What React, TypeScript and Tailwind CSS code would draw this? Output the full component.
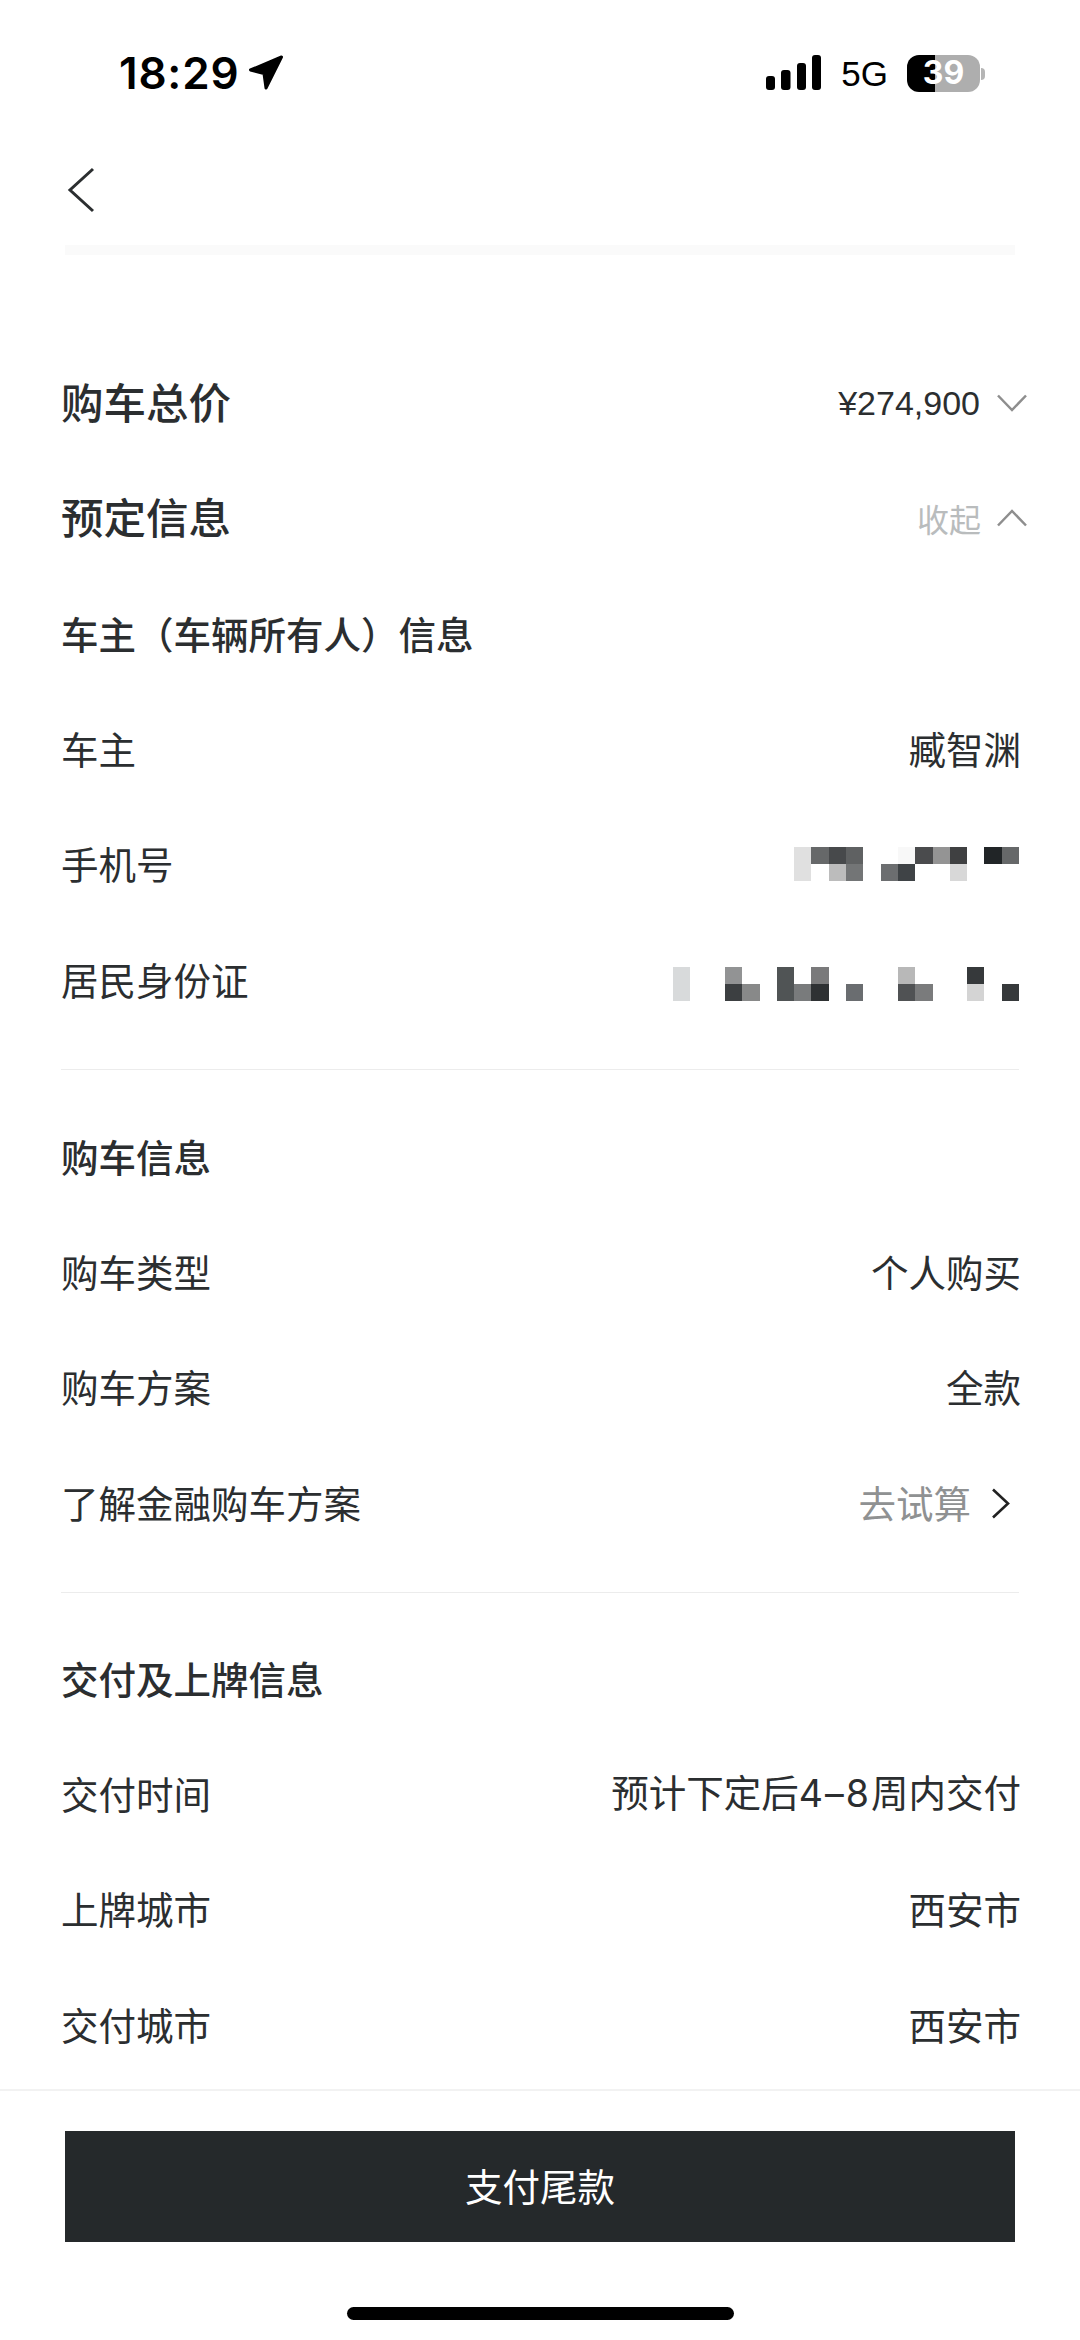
import React from "react";

const FONT = "font-['Noto_Sans_CJK_SC','Noto_Sans',sans-serif]";

const PHONE: string[][] = [
  ["#e0e0e0", "#666869", "#47494b", "#5f6162", "", "", "#f8f8f8", "#4a4b4d", "#949494", "#3f4041", "", "#212527", "#666869"],
  ["#e0e0e0", "", "#bcbcbc", "#737576", "", "#6c6e70", "#3f4346", "", "", "#d8d8d8", "", "", ""],
];
const IDCARD: string[][] = [
  ["#d8dadb", "", "", "#929394", "", "", "#505455", "", "#7a7a7b", "", "", "", "", "#b8b8b8", "", "", "", "#36393b", "", ""],
  ["#d8dadb", "", "", "#3c3f41", "#888989", "", "#505455", "#797b7c", "#2e3133", "", "#6a6d70", "", "", "#505254", "#7a7b7c", "", "", "#d4d4d4", "", "#36393b"],
];

function Mosaic({ data }: { data: string[][] }) {
  return (
    <div className="flex flex-col">
      {data.map((row, i) => (
        <div key={i} className="flex">
          {row.map((c, j) => (
            <div key={j} className="w-[17.3px] h-[17px]" style={{ backgroundColor: c || "transparent" }} />
          ))}
        </div>
      ))}
    </div>
  );
}

function Row({ label, children }: { label: string; children?: React.ReactNode }) {
  return (
    <div className="h-[115.5px] flex items-center justify-between">
      <span className="text-[37.5px] leading-none text-[#2b2e30] mb-[4px]">{label}</span>
      {children}
    </div>
  );
}

function Value({ children }: { children: React.ReactNode }) {
  return <span className="text-[37.5px] leading-none text-[#2b2e30] mr-[-2px] mb-[4px]">{children}</span>;
}

function Heading({ children }: { children: React.ReactNode }) {
  return (
    <div className="h-[115.5px] flex items-center">
      <span className="text-[37.5px] leading-none font-medium text-[#2b2e30] mb-[3px]">{children}</span>
    </div>
  );
}

export default function App() {
  return (
    <div className={`${FONT} w-[1080px] h-[2340px] bg-white flex flex-col overflow-hidden`}>
      {/* status bar */}
      <div className="h-[150px] shrink-0 flex items-start justify-between pt-[53px] pl-[119px] pr-[100px]">
        <div className="flex items-center h-[40px] gap-[9px]">
          <span className="font-['Inter',sans-serif] text-[44px] leading-none font-semibold text-black tracking-[0.8px]">18:29</span>
          <svg width="36" height="36" viewBox="0 0 36 36">
            <path
              d="M33.5 2 L2.5 15 L16 18.5 L18 33 Z"
              fill="#000"
              stroke="#000"
              strokeWidth="3"
              strokeLinejoin="round"
            />
          </svg>
        </div>
        <div className="flex items-center h-[40px]">
          <svg width="55" height="36" viewBox="0 0 55 36" className="mr-[20px]">
            <rect x="0" y="21" width="9" height="14" rx="3" fill="#000" />
            <rect x="15" y="15" width="9.5" height="20" rx="3" fill="#000" />
            <rect x="31" y="8" width="9" height="27" rx="3" fill="#000" />
            <rect x="46" y="0" width="9" height="35" rx="3" fill="#000" />
          </svg>
          <span className="font-['Liberation_Sans',sans-serif] text-[35px] leading-none text-black mr-[19px]">5G</span>
          <div className="relative w-[73px] h-[37px] rounded-[12px] bg-[linear-gradient(90deg,#000_38%,#aeaeae_38%)] flex items-center justify-center">
            <span className="font-['Inter',sans-serif] text-[32px] leading-none font-bold text-white">39</span>
            <div className="absolute left-[74px] top-[13px] w-[4px] h-[12px] rounded-r-[4px] bg-[#b5b5b5]" />
          </div>
        </div>
      </div>

      {/* nav */}
      <div className="h-[95px] shrink-0 flex items-center pl-[67px] pb-[15px]">
        <svg width="28" height="46" viewBox="0 0 28 46" fill="none" stroke="#2b2e30" strokeWidth="3">
          <path d="M26 2 L3 23 L26 44" />
        </svg>
      </div>
      <div className="h-[10px] mx-[65px] shrink-0 bg-[#fafafa]" />

      {/* content */}
      <div className="flex-1 min-h-0 px-[61px] pt-[90px]">
        <div className="h-[115.5px] flex items-center justify-between">
          <span className="text-[42.5px] leading-none font-medium text-[#2b2e30] mb-[4px]">购车总价</span>
          <div className="flex items-center gap-[17px] mr-[-8px]">
            <span className="font-['Liberation_Sans',sans-serif] text-[34px] leading-none text-[#2b2e30]">¥274,900</span>
            <svg width="30" height="18" viewBox="0 0 30 18" fill="none" stroke="#8e8e8e" strokeWidth="2.5">
              <path d="M1 1.5 L15 16 L29 1.5" />
            </svg>
          </div>
        </div>
        <div className="h-[115.5px] flex items-center justify-between">
          <span className="text-[42.5px] leading-none font-medium text-[#2b2e30] mb-[4px]">预定信息</span>
          <div className="flex items-center gap-[16px] mr-[-8px]">
            <span className="text-[32px] leading-none text-[#b9bcbd]">收起</span>
            <svg width="30" height="18" viewBox="0 0 30 18" fill="none" stroke="#8e8e8e" strokeWidth="2.5">
              <path d="M1 16.5 L15 2 L29 16.5" />
            </svg>
          </div>
        </div>
        <Heading>车主（车辆所有人）信息</Heading>
        <Row label="车主"><Value>臧智渊</Value></Row>
        <Row label="手机号"><div className="pb-[2px]"><Mosaic data={PHONE} /></div></Row>
        <Row label="居民身份证"><div className="pt-[8px]"><Mosaic data={IDCARD} /></div></Row>

        <div className="h-[1px] bg-[#ececec] mt-[31px] mb-[29px]" />

        <Heading>购车信息</Heading>
        <Row label="购车类型"><Value>个人购买</Value></Row>
        <Row label="购车方案"><Value>全款</Value></Row>
        <Row label="了解金融购车方案">
          <div className="flex items-center gap-[20px] mr-[9px]">
            <span className="text-[37.5px] leading-none text-[#8f9192] mb-[4px]">去试算</span>
            <svg width="19" height="31" viewBox="0 0 19 31" fill="none" stroke="#222" strokeWidth="2.6">
              <path d="M2 1.5 L17 15.5 L2 29.5" />
            </svg>
          </div>
        </Row>

        <div className="h-[1px] bg-[#ececec] mt-[31px] mb-[28px]" />

        <Heading>交付及上牌信息</Heading>
        <Row label="交付时间">
          <Value>
            预计下定后<span className="font-['Inter',sans-serif] tracking-[2px]">4–8</span>周内交付
          </Value>
        </Row>
        <Row label="上牌城市"><Value>西安市</Value></Row>
        <Row label="交付城市"><Value>西安市</Value></Row>
      </div>

      {/* footer */}
      <div className="h-[251px] shrink-0 border-t-2 border-[#f2f2f2] flex flex-col items-center pt-[40px]">
        <button className="w-[950px] h-[111px] bg-[#25292b] text-white text-[37.5px] leading-none flex items-center justify-center pb-[4px]">
          支付尾款
        </button>
        <div className="mt-[65px] w-[387px] h-[13px] rounded-full bg-black" />
      </div>
    </div>
  );
}
